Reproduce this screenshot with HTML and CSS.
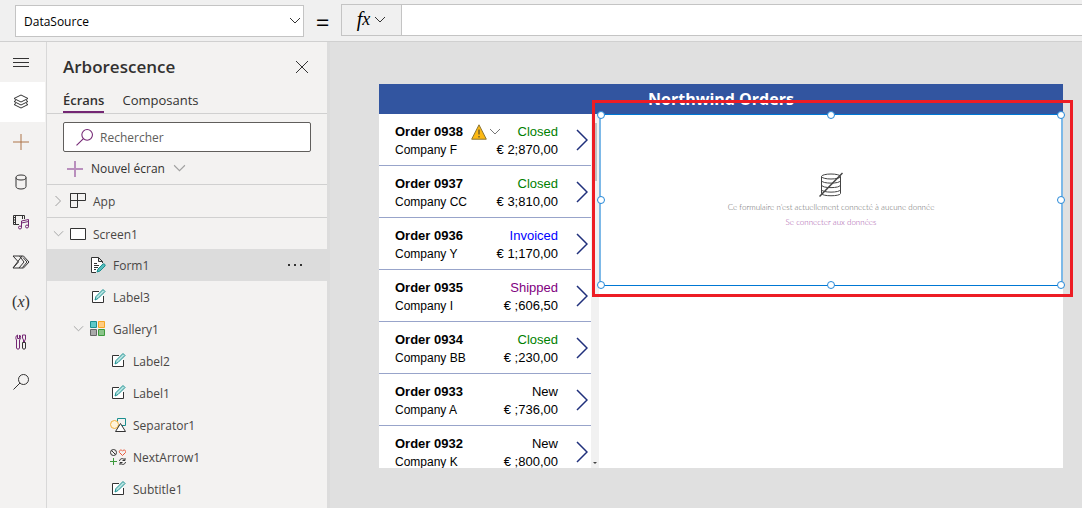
FILE: index.html
```html
<!DOCTYPE html>
<html lang="fr">
<head>
<meta charset="utf-8">
<title>Northwind Orders</title>
<link rel="stylesheet" href="styles.css">
</head>
<body>
<svg class="defs" aria-hidden="true">
  <symbol id="down" viewBox="0 0 12 8"><path d="M1 1l5 5 5-5"/></symbol>
  <symbol id="plus" viewBox="0 0 16 16"><path d="M8 0v16M0 8h16"/></symbol>
  <symbol id="search" viewBox="0 0 16 16"><circle cx="10.5" cy="5.5" r="5"/><path d="M7 9L0.5 15.5"/></symbol>
  <symbol id="edit" viewBox="0 0 16 16">
    <path d="M9 2.5H2.5v11h11V7" stroke="#333" fill="#fff"/>
    <path d="M5 11l1-3.5 7-7 2 2-7 7z" stroke="#1a8f8f" fill="#b5e3e1"/>
  </symbol>
  <symbol id="next" viewBox="0 0 12 22"><path d="M1 1l10 10L1 21"/></symbol>
</svg>

<header class="topbar">
  <div class="property">
    <select class="property-select" aria-label="Propriété"><option>DataSource</option></select>
    <svg class="ico property-chev" width="12" height="8"><use href="#down"/></svg>
  </div>
  <span class="equals">=</span>
  <div class="formula">
    <button class="fx" aria-label="Fonctions"><span class="fx-f">f</span><span class="fx-x">x</span><svg class="ico" width="12" height="8"><use href="#down"/></svg></button>
    <input class="formula-input" type="text" aria-label="Formule">
  </div>
</header>

<div class="workspace">
  <nav class="rail" aria-label="Outils">
    <button class="rail-btn" aria-label="Menu"><svg class="ico" width="16" height="16" viewBox="0 0 16 16"><path d="M0 4.500h16M0 8.500h16M0 12.500h16"/></svg></button>
    <button class="rail-btn rail-btn-active" aria-label="Arborescence"><svg class="ico" width="16" height="16" viewBox="0 0 16 16"><path d="M8 1l7 3.500L8 8 1 4.500zM3 6.500L1 7.500 8 11l7-3.500-2-1M3 9.500l-2 1L8 14l7-3.500-2-1"/></svg></button>
    <button class="rail-btn rail-plus" aria-label="Insérer"><svg class="ico" width="16" height="16"><use href="#plus"/></svg></button>
    <button class="rail-btn" aria-label="Données"><svg class="ico" width="16" height="16" viewBox="0 0 16 16"><ellipse cx="8" cy="3.500" rx="5" ry="2.500"/><path d="M3 3.500v9C3 14 5 15 8 15s5-1 5-2.500v-9"/></svg></button>
    <button class="rail-btn" aria-label="Média"><svg class="ico" width="18" height="16" viewBox="0 0 18 16"><path d="M7 10.500H1.500v-9h11V5M1.500 3.500h2M1.500 6h2M1.500 8.500h2M3.500 1.500v9M10.500 1.500V5"/><path class="violet" d="M9.500 13.500V7l7-1.500v7M9.500 9l7-1.500"/><circle class="violet" cx="8" cy="13.500" r="1.500"/><circle class="violet" cx="15" cy="12.500" r="1.500"/></svg></button>
    <button class="rail-btn" aria-label="Power Automate"><svg class="ico" width="18" height="16" viewBox="0 0 18 16"><path d="M1 2h10.500L17 8l-5.500 6H1l5.500-6zM7.500 2L12 8l-5 6M1 14L10 2M11 3.500L15 8l-4.500 5.500"/></svg></button>
    <button class="rail-btn rail-var" aria-label="Variables">(<i>x</i>)</button>
    <button class="rail-btn" aria-label="Outils avancés"><svg class="ico" width="16" height="16" viewBox="0 0 16 16"><path class="violet" d="M4.500 1v3.500h2V1C8 1.500 8 5 6.500 6v8c0 1.500-3 1.500-3 0V6C2.500 5 2.500 1.500 4.500 1z"/><path class="violet" d="M9.500 1h3v4l-1 2v1.500M10.500 8V6l-1-2V1"/><path d="M9.500 8.500h3V14c0 1.500-3 1.500-3 0z"/></svg></button>
    <button class="rail-btn" aria-label="Rechercher"><svg class="ico" width="16" height="16"><use href="#search"/></svg></button>
  </nav>

  <aside class="tree">
    <div class="tree-head">
      <h1 class="tree-title">Arborescence</h1>
      <button class="close" aria-label="Fermer"><svg class="ico" width="14" height="14" viewBox="0 0 14 14"><path d="M1 1l12 12M13 1L1 13"/></svg></button>
    </div>
    <div class="tabs">
      <button class="tab tab-active">Écrans</button>
      <button class="tab">Composants</button>
    </div>
    <label class="search">
      <svg class="ico violet" width="17" height="17" viewBox="0 0 16 16"><use href="#search"/></svg>
      <input class="search-input" type="text" placeholder="Rechercher" aria-label="Rechercher">
    </label>
    <button class="new-screen"><svg class="ico lilac" width="16" height="16"><use href="#plus"/></svg><span>Nouvel écran</span><svg class="ico pale" width="13" height="9"><use href="#down"/></svg></button>

    <div class="row row-root">
      <svg class="ico pale chev" width="10" height="12" viewBox="0 0 10 12"><path d="M2 1l5 5-5 5"/></svg>
      <svg class="ico" width="16" height="16" viewBox="0 0 16 16"><path d="M.5.5h15v7H.5zM.5.5v14h7V.5"/></svg>
      <span class="name">App</span>
    </div>
    <div class="row row-root">
      <svg class="ico pale chev" width="11" height="8"><use href="#down"/></svg>
      <svg class="ico" width="16" height="16" viewBox="0 0 16 16"><path d="M.5 2.500h15v11H.5z" fill="#fff"/></svg>
      <span class="name">Screen1</span>
    </div>
    <div class="row level-1 row-selected">
      <svg class="ico" width="16" height="16" viewBox="0 0 16 16"><path d="M6 15.500H1.500V.5h7l4 4V6M8.500.5v4h4" fill="#fff"/><path d="M4 6.500h3M4 8.500h5M4 10.500h4M4 12.500h2"/><path d="M7 15l1-3 5-5c1-.8 2.800.8 2 2l-5 5z" stroke="#1a8f8f" fill="#57bdbd"/></svg>
      <span class="name">Form1</span>
      <button class="more" aria-label="Plus d’options"><svg width="16" height="4" viewBox="0 0 16 4"><path d="M1 1h2v2H1zM7 1h2v2H7zM13 1h2v2h-2z" fill="#333"/></svg></button>
    </div>
    <div class="row level-1"><svg class="ico" width="16" height="16"><use href="#edit"/></svg><span class="name">Label3</span></div>
    <div class="row level-parent">
      <svg class="ico pale chev" width="11" height="8"><use href="#down"/></svg>
      <svg class="ico" width="16" height="16" viewBox="0 0 16 16"><path d="M.5.5h6v6h-6z" fill="#5cc8c8" stroke="#1a8f8f"/><path d="M8.500.5h6v6h-6z" fill="#ffcc80" stroke="#f5a623"/><path d="M.5 8.500h6v6h-6z" fill="#aaa" stroke="#666"/><path d="M8.500 8.500h6v6h-6z" fill="#8bc48b" stroke="#3c9a3c"/></svg>
      <span class="name">Gallery1</span>
    </div>
    <div class="row level-2"><svg class="ico" width="16" height="16"><use href="#edit"/></svg><span class="name">Label2</span></div>
    <div class="row level-2"><svg class="ico" width="16" height="16"><use href="#edit"/></svg><span class="name">Label1</span></div>
    <div class="row level-2">
      <svg class="ico" width="16" height="16" viewBox="0 0 16 16"><path d="M7.500 1.500h8v7h-8z" stroke="#1a8f8f"/><circle cx="4.500" cy="7.500" r="4" stroke="#f2b13c" fill="#fff4da"/><path d="M10.500 6.500l5 8h-10z" fill="#fff"/></svg>
      <span class="name">Separator1</span>
    </div>
    <div class="row level-2">
      <svg class="ico" width="16" height="16" viewBox="0 0 16 16"><circle cx="3.500" cy="3.500" r="3"/><path d="M1.500 1.500l4 4"/><path d="M12.500 6.500l-3-3C8.500 1.500 11 0 12.500 2 14 0 16.500 1.500 15.500 3.500z" stroke="#e8583a"/><path d="M3.500 9v7M0 12.500h7" stroke="#3c9a3c"/><path d="M9.500 12c.5-3 4-3 5-1M15 9v2.500h-2.500M15.500 13c-.5 3-4 3-5 1M10 16v-2.500h2.500"/></svg>
      <span class="name">NextArrow1</span>
    </div>
    <div class="row level-2"><svg class="ico" width="16" height="16"><use href="#edit"/></svg><span class="name">Subtitle1</span></div>
  </aside>

  <main class="canvas">
    <div class="app">
      <h2 class="app-title">Northwind Orders</h2>
      <div class="app-body">
        <div class="gallery">
          <div class="order">
            <div class="order-text"><div class="line"><b>Order 0938</b>
              <span class="warn"><svg width="16" height="16" viewBox="0 0 16 16"><path d="M8 .8l7.300 14.400H.7z" fill="#fdb913" stroke="#8a7433"/><path d="M8 5.500v5M8 12v1.500" stroke="#333"/></svg><svg class="ico gray" width="12" height="8"><use href="#down"/></svg></span>
              <span class="closed">Closed</span></div><div class="line"><small>Company F</small><span>€ 2;870,00</span></div></div>
            <svg class="ico navy" width="12" height="22"><use href="#next"/></svg>
          </div>
          <div class="order"><div class="order-text"><div class="line"><b>Order 0937</b><span class="closed">Closed</span></div><div class="line"><small>Company CC</small><span>€ 3;810,00</span></div></div><svg class="ico navy" width="12" height="22"><use href="#next"/></svg></div>
          <div class="order"><div class="order-text"><div class="line"><b>Order 0936</b><span class="invoiced">Invoiced</span></div><div class="line"><small>Company Y</small><span>€ 1;170,00</span></div></div><svg class="ico navy" width="12" height="22"><use href="#next"/></svg></div>
          <div class="order"><div class="order-text"><div class="line"><b>Order 0935</b><span class="shipped">Shipped</span></div><div class="line"><small>Company I</small><span>€ ;606,50</span></div></div><svg class="ico navy" width="12" height="22"><use href="#next"/></svg></div>
          <div class="order"><div class="order-text"><div class="line"><b>Order 0934</b><span class="closed">Closed</span></div><div class="line"><small>Company BB</small><span>€ ;230,00</span></div></div><svg class="ico navy" width="12" height="22"><use href="#next"/></svg></div>
          <div class="order"><div class="order-text"><div class="line"><b>Order 0933</b><span>New</span></div><div class="line"><small>Company A</small><span>€ ;736,00</span></div></div><svg class="ico navy" width="12" height="22"><use href="#next"/></svg></div>
          <div class="order"><div class="order-text"><div class="line"><b>Order 0932</b><span>New</span></div><div class="line"><small>Company K</small><span>€ ;800,00</span></div></div><svg class="ico navy" width="12" height="22"><use href="#next"/></svg></div>
        </div>
        <div class="scrollbar"><div class="thumb"></div><svg width="6" height="4" viewBox="0 0 6 4"><path d="M1 1h4L3 3z" fill="#444"/></svg></div>
        <div class="detail">
          <section class="form">
            <svg class="ico nodata" width="24" height="26" viewBox="0 0 24 26"><ellipse cx="12" cy="4.500" rx="9.500" ry="2.500"/><path d="M2.500 4.500v17c0 3 19 3 19 0v-17M2.500 8.500c0 3.500 19 3.500 19 0M2.500 13c0 3.500 19 3.500 19 0M2.500 17.500c0 3.500 19 3.500 19 0"/><path d="M.5 24.500L23.500 1" stroke-width="1.500"/></svg>
            <p class="form-note">Ce formulaire n’est actuellement connecté à aucune donnée</p>
            <a class="form-link" href="#">Se connecter aux données</a>
            <i class="handle top start"></i><i class="handle top mid"></i><i class="handle top end"></i>
            <i class="handle center start"></i><i class="handle center end"></i>
            <i class="handle bottom start"></i><i class="handle bottom mid"></i><i class="handle bottom end"></i>
            <div class="highlight"></div>
          </section>
        </div>
      </div>
    </div>
  </main>
</div>
</body>
</html>
```

FILE: styles.css
```css
* { box-sizing: border-box; }
body {
  margin: 0;
  height: 100vh;
  display: flex;
  flex-direction: column;
  overflow: hidden;
  background: #f3f2f1;
  color: #323130;
  font: 12px/16px "Open Sans", "Noto Sans", sans-serif;
}
button, input, select { font: inherit; color: inherit; margin: 0; padding: 0; border: 0; background: none; border-radius: 0; outline: 0; }
.defs { position: absolute; width: 0; height: 0; }
.ico { fill: none; stroke: #333; flex: none; }
.violet { stroke: #742774; }
.lilac { stroke: #b98fbd; stroke-width: 2; }
.pale { stroke: #a0a0a0; }
.gray { stroke: #777; }
.navy { stroke: #20307c; stroke-width: 1.5; }

/* Formula bar */
.topbar { flex: none; display: flex; align-items: flex-start; height: 42px; background: #f0f0f0; border-bottom: 1px solid #d0d0d0; }
.property { position: relative; flex: none; width: 289px; margin: 5px 0 0 15px; }
.property-select { appearance: none; width: 100%; height: 32px; padding: 1px 8px 0; background: #fff; border: 1px solid #c4c4c4; color: #000; }
.property-chev { position: absolute; right: 3px; top: 12px; pointer-events: none; }
.equals { width: 37px; padding-top: 5px; text-align: center; font-size: 24px; line-height: 34px; color: #000; }
.formula { flex: 1; display: flex; height: 32px; margin-top: 4px; border: 1px solid #c4c4c4; border-right: 0; }
.fx { display: flex; align-items: center; justify-content: center; width: 60px; padding-bottom: 2px; border-right: 1px solid #c4c4c4; font: italic 20px/24px "Liberation Serif", serif; color: #000; }
.fx-x { font-size: 18px; }
.fx .ico { margin: 2px 0 0 4px; }
.formula-input { flex: 1; min-width: 0; padding: 0 8px; background: #fff; }

/* Left rail */
.workspace { flex: 1; min-height: 0; display: flex; }
.rail { flex: none; width: 47px; border-right: 1px solid #d8d8d8; }
.rail-btn { display: flex; align-items: center; justify-content: center; width: 45px; height: 40px; padding-right: 3px; }
.rail-btn-active { background: #fff; }
.rail-plus .ico { stroke: #ad7448; }
.rail-var { font: 16px/20px "Liberation Serif", serif; }

/* Tree view */
.tree { flex: none; width: 283px; overflow: hidden; border-right: 3px solid #dcdcdc; }
.tree-head { display: flex; align-items: center; justify-content: space-between; height: 48px; padding: 1px 18px 0 16px; }
.tree-title { margin: 0; font-size: 17px; line-height: 24px; font-weight: 600; }
.close { display: flex; }
.tabs { display: flex; gap: 18px; height: 24px; padding-left: 16px; border-bottom: 1px solid #d0d0d0; }
.tab { height: 23px; padding-bottom: 1px; font-size: 13px; line-height: 18px; border-bottom: 2px solid transparent; }
.tab-active { font-weight: 600; border-color: #742774; }
.search { display: flex; align-items: center; gap: 7px; height: 30px; margin: 8px 16px 0; padding-left: 12px; background: #fff; border: 1px solid #605e5c; border-radius: 2px; }
.search-input { flex: 1; min-width: 0; padding-top: 2px; }
.search-input::placeholder { color: #605e5c; opacity: 1; }
.new-screen { display: flex; align-items: center; gap: 8px; width: 100%; height: 33px; padding: 1px 0 0 20px; border-bottom: 1px solid #d0d0d0; }
.row { display: flex; align-items: center; height: 32px; padding-right: 24px; }
.row-root { padding-left: 6px; }
.row-root + .row-root { border-top: 1px solid #d0d0d0; }
.chev { width: 11px; margin-right: 6px; }
.name { flex: 1; margin-left: 7px; padding-top: 2px; color: #484644; }
.level-1 { padding-left: 43px; }
.level-parent { padding-left: 26px; }
.level-2 { padding-left: 63px; }
.row-selected { background: #dcdcdc; }
.more { display: flex; }

/* Canvas */
.canvas { flex: 1; min-width: 0; display: flex; padding: 42px 19px 40px 49px; background: #e0e0e0; }
.app { flex: 1; min-width: 0; display: flex; flex-direction: column; background: #fff; font-family: "Liberation Sans", Arial, sans-serif; color: #000; }
.app-title { flex: none; margin: 0; background: #3255a0; color: #fff; text-align: center; font: 700 16px/30px "Open Sans", sans-serif; }
.app-body { flex: 1; min-height: 0; display: flex; }
.gallery { flex: none; width: 212px; overflow: hidden; }
.order { display: flex; align-items: center; justify-content: space-between; height: 52px; padding: 1px 3px 0 16px; border-bottom: 1px solid #98a4ca; }
.order-text { width: 163px; padding-top: 1px; font-size: 13px; line-height: 18px; }
.line { display: flex; justify-content: space-between; }
.line small { font-size: 12px; }
.warn { display: flex; align-items: center; gap: 2px; margin-right: 8px; }
.closed { color: #008000; }
.invoiced { color: #0000ff; }
.shipped { color: #800080; }
.scrollbar { flex: none; display: flex; flex-direction: column; justify-content: space-between; align-items: center; width: 8px; padding: 9px 0 3px; background: #f1f1f1; }
.thumb { width: 4px; height: 58px; background: #c1c1c1; }
.detail { flex: 1; min-width: 0; }
.form { position: relative; display: flex; flex-direction: column; align-items: center; height: 172px; border: 1px solid #0078d4; border-width: 1px 2px; border-left-color: #7db9e8; border-right-color: #7db9e8; padding-top: 57px; font: 300 8px/14px Lato, sans-serif; }
.nodata { stroke: #444; }
.form-note { margin: 2px 0 1px; color: #666; }
.form-link { color: #a44fa8; text-decoration: none; }
.handle { position: absolute; width: 8px; height: 8px; background: #fff; border: 1px solid #2488d8; border-radius: 50%; transform: translate(-50%, -50%); }
.top { top: 0; }
.center { top: 50%; }
.bottom { top: 100%; }
.start { left: 0; }
.mid { left: 50%; }
.end { left: 100%; }
.highlight { position: absolute; inset: -15px -12px -12px -9px; border: 3px solid #ed1c24; pointer-events: none; }
```
